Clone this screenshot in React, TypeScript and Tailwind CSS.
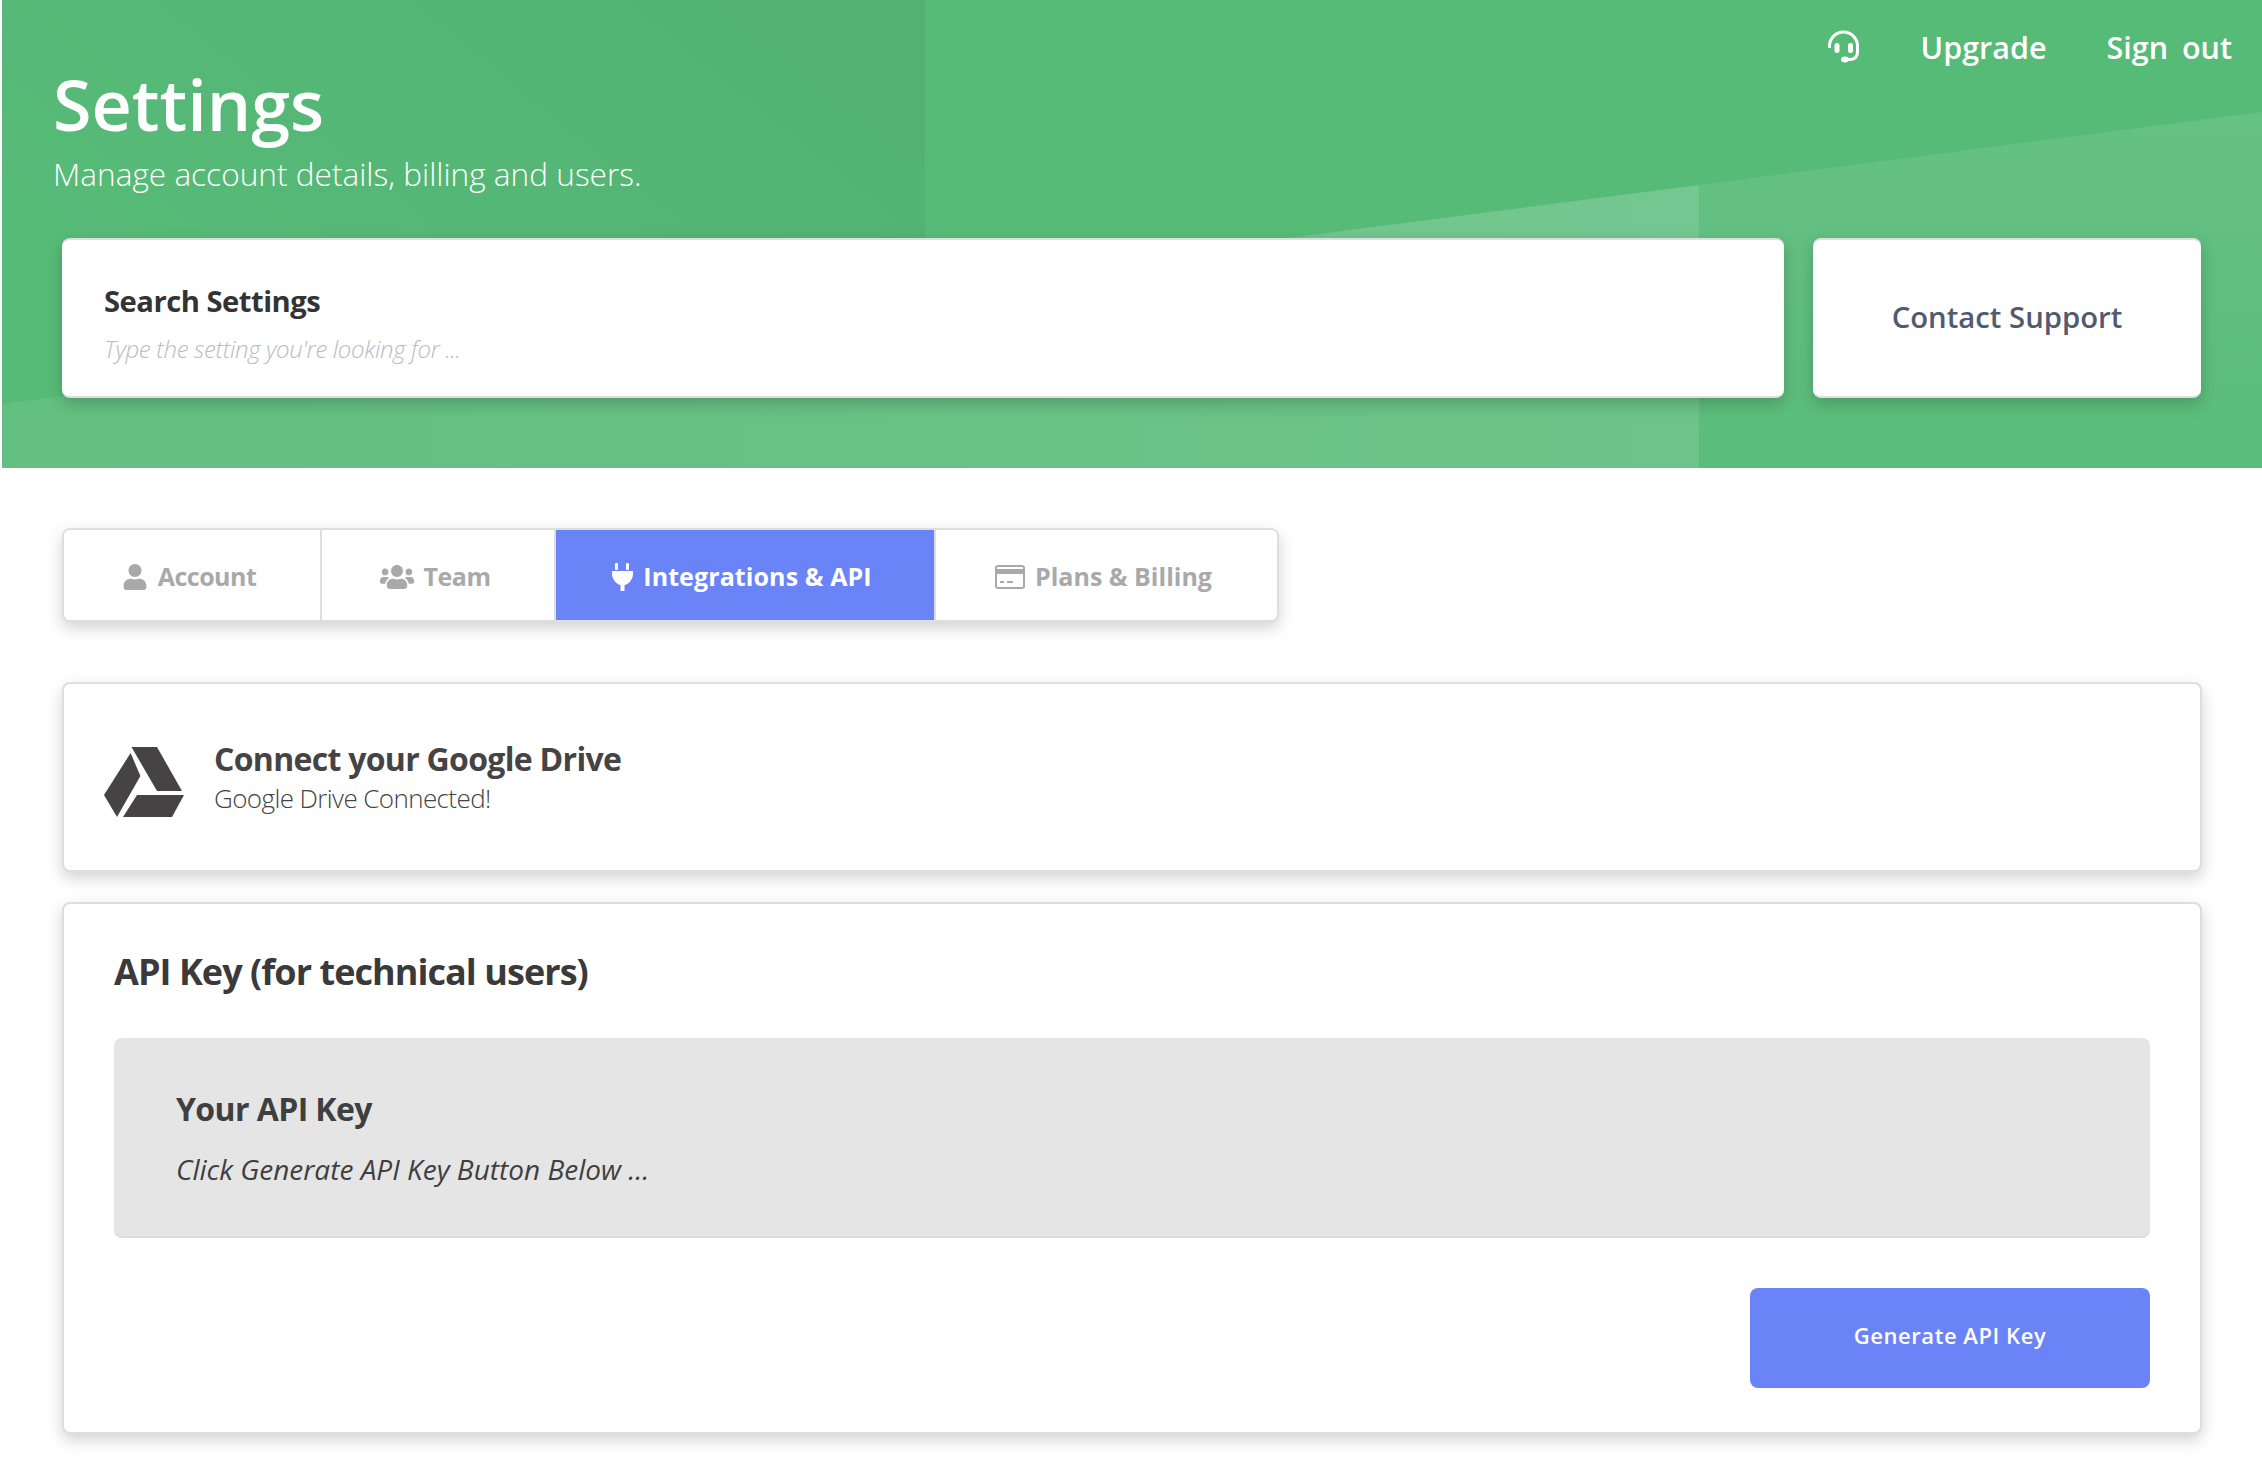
import { FaUser, FaUsers } from "react-icons/fa";

const font = "font-['Open_Sans','Noto_Sans',sans-serif]";

const HeadsetIcon = () => (
  <svg width="34" height="34" viewBox="0 0 34 34" fill="none" className="text-white">
    <path d="M2.5 18V16A14 14 0 0 1 30.5 16V22Q30.5 29.5 22 29.5H18" stroke="currentColor" strokeWidth="3" />
    <ellipse cx="18" cy="29.5" rx="4" ry="3" fill="currentColor" />
    <rect x="7.5" y="13" width="5" height="10" rx="2.5" fill="currentColor" />
    <rect x="21" y="13" width="5" height="10" rx="2.5" fill="currentColor" />
  </svg>
);

const PlugIcon = () => (
  <svg width="21" height="28" viewBox="0 0 21 28" fill="currentColor">
    <rect x="3" y="0" width="3" height="7" rx="1" />
    <rect x="14" y="0" width="3" height="7" rx="1" />
    <path d="M0 8H21V11C21 17 16 21 13 22H8C5 21 0 17 0 11Z" />
    <rect x="8.5" y="21" width="4" height="7" />
  </svg>
);

const CardIcon = () => (
  <svg width="30" height="24" viewBox="0 0 30 24" fill="none">
    <rect x="1" y="1" width="28" height="22" rx="2" stroke="#a9a9a9" strokeWidth="2" />
    <rect x="1" y="4" width="28" height="5" fill="#a9a9a9" />
    <rect x="5" y="16" width="4" height="2" fill="#a9a9a9" />
    <rect x="12" y="16" width="6" height="2" fill="#a9a9a9" />
  </svg>
);

const DriveIcon = () => (
  <svg width="80" height="70" viewBox="0 0 80 70" fill="#454344" className="mt-[10px] shrink-0">
    <polygon points="27.5,0 53,0 78,44 53,44" />
    <polygon points="0,48 26.6,6 36.4,29 13,70" />
    <polygon points="33,48 80,48 68,70 19,70" />
  </svg>
);

const tabs = [
  { label: "Account", w: "w-[258px]", text: "tracking-[-0.5px]", icon: <FaUser size={26} /> },
  { label: "Team", w: "w-[234px]", text: "tracking-[-0.5px]", icon: <FaUsers size={34} /> },
  { label: "Integrations & API", w: "w-[380px]", text: "tracking-[0.1px]", icon: <PlugIcon />, active: true },
  { label: "Plans & Billing", w: "w-[341px]", text: "", icon: <CardIcon /> },
];

export default function App() {
  return (
    <div className={`min-h-screen bg-white ${font}`}>
      <header className="relative ml-[2px] h-[468px] overflow-hidden bg-[#57bb78]">
        {/* background shapes */}
        <svg className="absolute inset-0" width="2260" height="468" viewBox="0 0 2260 468">
          <defs>
            <linearGradient id="dark" x1="0" y1="0.7" x2="1" y2="0.3">
              <stop offset="0" stopColor="#000" stopOpacity="0" />
              <stop offset="1" stopColor="#000" stopOpacity="0.05" />
            </linearGradient>
            <linearGradient id="fade" x1="0" y1="0" x2="0" y2="1">
              <stop offset="0" stopColor="#fff" stopOpacity="0.09" />
              <stop offset="1" stopColor="#fff" stopOpacity="0.02" />
            </linearGradient>
            <linearGradient id="band" x1="0" y1="0" x2="1" y2="0">
              <stop offset="0" stopColor="#fff" stopOpacity="0.07" />
              <stop offset="1" stopColor="#fff" stopOpacity="0.13" />
            </linearGradient>
          </defs>
          <rect x="0" y="0" width="923" height="300" fill="url(#dark)" />
          <polygon points="0,404 1697,185 1697,468 0,468" fill="url(#band)" />
          <polygon points="1288,238 1697,185 1697,238" fill="#fff" opacity="0.05" />
          <polygon points="1697,185 2260,112 2260,468 1697,468" fill="url(#fade)" />
        </svg>

        <div className="relative flex h-full flex-col">
          <nav className="flex items-center justify-end gap-[60px] pt-[30px] pr-[30px] text-[30.5px] leading-[34px] font-semibold text-white">
            <HeadsetIcon />
            <a>Upgrade</a>
            <a className="[word-spacing:6px]">Sign out</a>
          </nav>
          <div className="ml-[51px] mt-[-2px]">
            <h1 className="text-[70px] leading-[84px] font-semibold text-white">Settings</h1>
            <p className="mt-[8px] text-[31.6px] leading-[40px] font-light text-white">
              Manage account details, billing and users.
            </p>
          </div>
          <div className="mt-[44px] ml-[60px] mr-[61px] flex gap-[29px]">
            <div className="h-[160px] flex-1 rounded-lg border-t-[2px] border-b-[2px] border-[#dedede] bg-white pl-[42px] pt-[42px] shadow-[0_6px_16px_rgba(0,0,0,0.2)]">
              <div className="text-[29.2px] leading-[38px] font-bold tracking-[-0.5px] text-[#333]">Search Settings</div>
              <div className="mt-[13px] text-[24px] leading-[32px] font-light tracking-[-0.35px] italic text-[#bbb]">
                Type the setting you're looking for ...
              </div>
            </div>
            <div className="flex h-[160px] w-[388px] items-center justify-center rounded-lg border-t-[2px] border-b-[2px] border-[#dedede] bg-white text-[29.3px] font-semibold text-[#525a72] shadow-[0_6px_16px_rgba(0,0,0,0.2)]">
              Contact Support
            </div>
          </div>
        </div>
      </header>

      <main className="ml-[62px] mr-[60px]">
        <div className="mt-[60px] flex h-[94px] w-[1217px] overflow-hidden rounded-lg border-2 border-[#dedede] bg-white shadow-[0_6px_16px_rgba(0,0,0,0.18)]">
          {tabs.map((t) => (
            <div
              key={t.label}
              className={`flex items-center justify-center gap-[10px] border-r-2 border-[#dedede] pt-[3px] pr-[6px] text-[25px] font-bold last:border-r-0 ${t.w} ${
                t.active ? "bg-[#6a83f7] text-white" : "bg-white text-[#a9a9a9]"
              }`}
            >
              {t.icon}
              <span className={t.text}>{t.label}</span>
            </div>
          ))}
        </div>

        <section className="mt-[60px] flex h-[190px] items-center gap-[30px] rounded-lg border-2 border-[#dedede] bg-white pl-[40px] shadow-[0_6px_16px_rgba(0,0,0,0.18)]">
          <DriveIcon />
          <div>
            <div className="text-[32px] leading-[42px] font-bold tracking-[-0.7px] text-[#454344]">Connect your Google Drive</div>
            <div className="text-[26px] leading-[36px] font-light tracking-[-0.6px] text-[#454344]">Google Drive Connected!</div>
          </div>
        </section>

        <section className="mt-[30px] h-[532px] rounded-lg border-2 border-[#dedede] bg-white px-[50px] pt-[43px] shadow-[0_6px_16px_rgba(0,0,0,0.18)]">
          <h2 className="text-[36px] leading-[50px] font-bold tracking-[-0.95px] text-[#3a3a3a]">API Key (for technical users)</h2>
          <div className="mt-[41px] h-[200px] rounded-lg border-b-2 border-[#dcdcdc] bg-[#e5e5e5] pl-[62px] pt-[49px]">
            <div className="text-[32px] leading-[44px] font-bold tracking-[-0.6px] text-[#3f3f3f]">Your API Key</div>
            <div className="mt-[19px] text-[28px] leading-[38px] italic text-[#3f3f3f]">
              Click Generate API Key Button Below ...
            </div>
          </div>
          <div className="mt-[50px] flex justify-end">
            <button className="h-[100px] w-[400px] rounded-lg bg-[#6a83f7] pb-[6px] text-[22px] font-semibold tracking-wide text-white">
              Generate API Key
            </button>
          </div>
        </section>
      </main>
    </div>
  );
}
